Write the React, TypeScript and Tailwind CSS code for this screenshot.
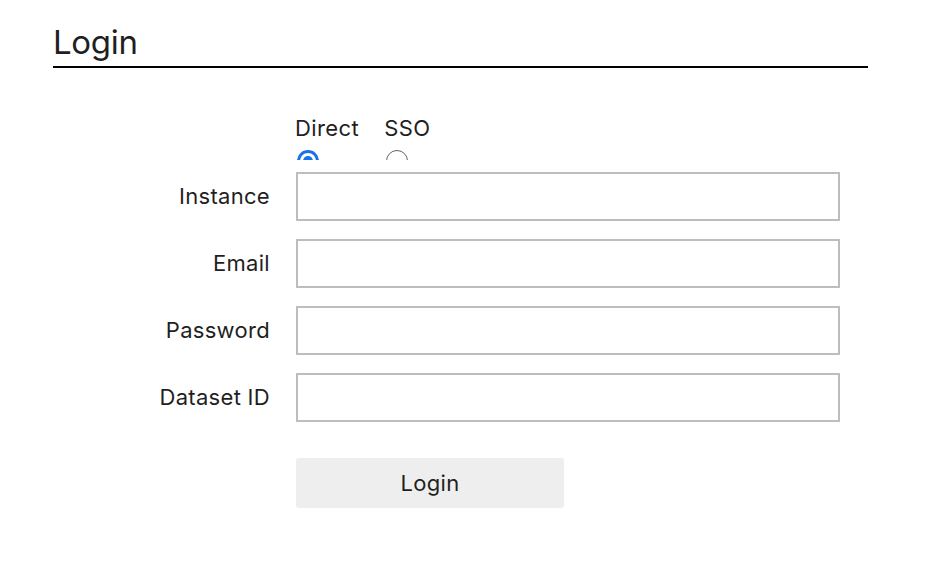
import React from "react";

const fields = ["Instance", "Email", "Password", "Dataset ID"];

export default function App() {
  return (
    <div className="min-h-[562px] w-[936px] bg-white text-[#1f1f1f]" style={{ fontFamily: "Inter, 'Noto Sans', sans-serif" }}>
      <div className="pl-[53px] pt-[22px]">
        <div className="w-[815px] border-b-2 border-black pb-[4px]">
          <h1 className="text-[33px] leading-[40px] tracking-[-0.3px]">Login</h1>
        </div>
      </div>
      <div className="mt-[46px] flex flex-col">
        <div className="ml-[295px] flex h-[46px] gap-[25px] overflow-hidden">
          {["Direct", "SSO"].map((o, i) => (
            <label key={o} className="flex flex-col items-start">
              <span className="text-[22px] leading-[28px] tracking-[0.4px]">{o}</span>
              <span
                className={
                  "ml-[2px] mt-[8px] flex h-[22px] w-[22px] shrink-0 items-center justify-center rounded-full " +
                  (i === 0 ? "border-[3px] border-[#1a73e8]" : "border-[1.5px] border-[#666]")
                }
              >
                {i === 0 ? <span className="h-[10px] w-[10px] rounded-full bg-[#1a73e8]" /> : null}
              </span>
            </label>
          ))}
        </div>
        <div className="mt-[12px] flex flex-col gap-[18px]">
          {fields.map((f) => (
            <div key={f} className="flex items-center">
              <div className="w-[270px] text-right text-[22px] tracking-[0.3px]">{f}</div>
              <input className="ml-[26px] h-[49px] w-[544px] border-2 border-[#bdbdbd] bg-white px-2 text-[21px] outline-none" />
            </div>
          ))}
        </div>
        <div className="ml-[296px] mt-[36px]">
          <button className="h-[50px] w-[268px] rounded-[3px] bg-[#eeeeee] text-[22px] tracking-[0.3px] text-[#1f1f1f]">Login</button>
        </div>
      </div>
    </div>
  );
}
